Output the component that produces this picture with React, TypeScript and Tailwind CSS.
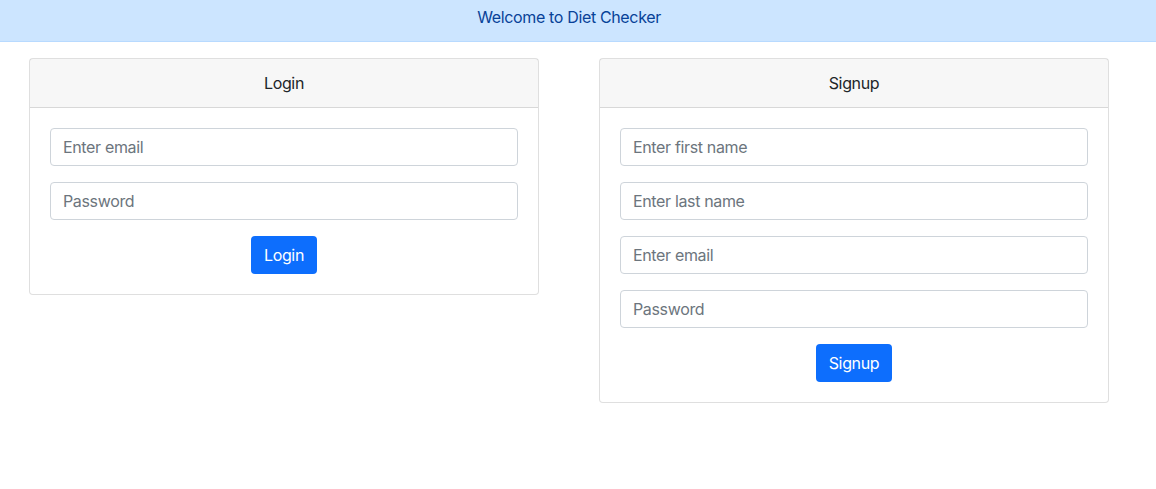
import { useState } from "react";

function Field({ placeholder, type = "text" }: { placeholder: string; type?: string }) {
  const [value, setValue] = useState("");
  return (
    <input
      type={type}
      value={value}
      onChange={(e) => setValue(e.target.value)}
      placeholder={placeholder}
      className="block h-[38px] w-full rounded-[4px] border border-[#ced4da] bg-white px-3 text-base tracking-[-0.35px] text-[#212529] outline-none placeholder:text-[#6c757d]"
    />
  );
}

function Card({
  title,
  fields,
  action,
}: {
  title: string;
  fields: { placeholder: string; type?: string }[];
  action: string;
}) {
  return (
    <div className="w-[510px] rounded-[4px] border border-[rgba(0,0,0,0.125)] bg-white">
      <div className="border-b border-[rgba(0,0,0,0.125)] bg-[rgba(0,0,0,0.03)] px-5 py-3 text-center leading-6 text-[#212529]">
        {title}
      </div>
      <div className="flex flex-col gap-4 p-5">
        {fields.map((f) => (
          <Field key={f.placeholder} placeholder={f.placeholder} type={f.type} />
        ))}
        <div className="flex justify-center">
          <button className="h-[38px] rounded-[4px] bg-[#0d6efd] px-[13px] text-base tracking-[-0.35px] text-white">
            {action}
          </button>
        </div>
      </div>
    </div>
  );
}

export default function App() {
  return (
    <div className="min-h-[489px] bg-white font-['Inter',sans-serif] text-base tracking-[-0.35px] text-[#212529]">
      <div className="h-[42px] border-b border-[#b8daff] bg-[#cce5ff] pr-[18px] pt-[5px] text-center leading-6 text-[#084298]">
        Welcome to Diet Checker
      </div>
      <div className="flex gap-[60px] pl-[29px] pt-4">
        <div className="flex flex-col items-start">
          <Card
            title="Login"
            fields={[{ placeholder: "Enter email", type: "email" }, { placeholder: "Password", type: "password" }]}
            action="Login"
          />
        </div>
        <div className="flex flex-col items-start">
          <Card
            title="Signup"
            fields={[
              { placeholder: "Enter first name" },
              { placeholder: "Enter last name" },
              { placeholder: "Enter email", type: "email" },
              { placeholder: "Password", type: "password" },
            ]}
            action="Signup"
          />
        </div>
      </div>
    </div>
  );
}
